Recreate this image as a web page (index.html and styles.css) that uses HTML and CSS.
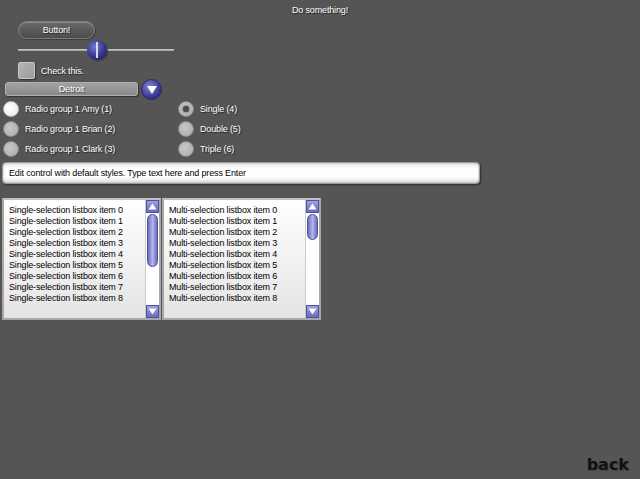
FILE: index.html
```html
<!DOCTYPE html>
<html lang="en">
<head>
<meta charset="UTF-8">
<title>GUI demo</title>
<link rel="stylesheet" href="styles.css">
</head>
<body>
<div class="screen">
  <div class="title">Do something!</div>

  <div class="button-row">
    <button class="pill">Button!</button>
  </div>

  <div class="slider">
    <div class="track"></div>
    <div class="thumb"></div>
  </div>

  <div class="check-row">
    <span class="checkbox"></span>
    <span class="label">Check this.</span>
  </div>

  <div class="combo">
    <div class="combo-field">Detroit</div>
    <div class="combo-btn">
      <svg width="12" height="10" viewBox="0 0 12 10"><polygon points="1,1 11,1 6,9" fill="#fff"/></svg>
    </div>
  </div>

  <div class="radios">
    <div class="radio-col">
      <div class="radio"><span class="dot on"></span><span class="label">Radio group 1 Amy (1)</span></div>
      <div class="radio"><span class="dot"></span><span class="label">Radio group 1 Brian (2)</span></div>
      <div class="radio"><span class="dot"></span><span class="label">Radio group 1 Clark (3)</span></div>
    </div>
    <div class="radio-col second">
      <div class="radio"><span class="dot picked"></span><span class="label">Single (4)</span></div>
      <div class="radio"><span class="dot"></span><span class="label">Double (5)</span></div>
      <div class="radio"><span class="dot"></span><span class="label">Triple (6)</span></div>
    </div>
  </div>

  <div class="edit">Edit control with default styles. Type text here and press Enter</div>

  <div class="lists">
    <div class="listbox">
      <ul class="items">
        <li>Single-selection listbox item 0</li>
        <li>Single-selection listbox item 1</li>
        <li>Single-selection listbox item 2</li>
        <li>Single-selection listbox item 3</li>
        <li>Single-selection listbox item 4</li>
        <li>Single-selection listbox item 5</li>
        <li>Single-selection listbox item 6</li>
        <li>Single-selection listbox item 7</li>
        <li>Single-selection listbox item 8</li>
      </ul>
      <div class="scrollbar">
        <div class="arrow"><svg width="9" height="7" viewBox="0 0 9 7"><polygon points="0.5,6.5 8.5,6.5 4.5,0.5" fill="#fff"/></svg></div>
        <div class="sb-track"><div class="sb-thumb long"></div></div>
        <div class="arrow"><svg width="9" height="7" viewBox="0 0 9 7"><polygon points="0.5,0.5 8.5,0.5 4.5,6.5" fill="#fff"/></svg></div>
      </div>
    </div>
    <div class="listbox">
      <ul class="items">
        <li>Multi-selection listbox item 0</li>
        <li>Multi-selection listbox item 1</li>
        <li>Multi-selection listbox item 2</li>
        <li>Multi-selection listbox item 3</li>
        <li>Multi-selection listbox item 4</li>
        <li>Multi-selection listbox item 5</li>
        <li>Multi-selection listbox item 6</li>
        <li>Multi-selection listbox item 7</li>
        <li>Multi-selection listbox item 8</li>
      </ul>
      <div class="scrollbar">
        <div class="arrow"><svg width="9" height="7" viewBox="0 0 9 7"><polygon points="0.5,6.5 8.5,6.5 4.5,0.5" fill="#fff"/></svg></div>
        <div class="sb-track"><div class="sb-thumb short"></div></div>
        <div class="arrow"><svg width="9" height="7" viewBox="0 0 9 7"><polygon points="0.5,0.5 8.5,0.5 4.5,6.5" fill="#fff"/></svg></div>
      </div>
    </div>
  </div>

  <div class="footer">
    <span class="back">back</span>
  </div>
</div>
</body>
</html>
```

FILE: styles.css
```css
html, body {
  margin: 0;
  padding: 0;
}
body {
  background-color: #555555;
  font-family: "Liberation Sans", Arial, sans-serif;
  font-size: 9px;
  letter-spacing: -0.15px;
  color: #fff;
}
.screen {
  width: 640px;
  height: 479px;
  display: flex;
  flex-direction: column;
  overflow: hidden;
}
.label {
  color: #fff;
  text-shadow: 1px 1px 1px #222;
}
.title {
  height: 20px;
  line-height: 20px;
  text-align: center;
  text-shadow: 1px 1px 1px #222;
}
.button-row {
  padding-left: 18px;
  height: 20px;
  margin-top: 1px;
}
.pill {
  width: 77px;
  height: 18px;
  padding: 0;
  border-radius: 9px;
  border: 1px solid #7c7c7c;
  background: linear-gradient(#6a6a6a, #4c4c4c);
  box-shadow: 1px 1px 1px #3a3a3a, inset 0 1px 0 #8a8a8a;
  color: #fff;
  font-family: inherit;
  font-size: 9px;
  letter-spacing: -0.15px;
  text-shadow: 1px 1px 1px #222;
}
.slider {
  position: relative;
  height: 20px;
  margin-left: 18px;
  width: 156px;
}
.track {
  position: absolute;
  left: 0;
  right: 0;
  top: 8px;
  height: 2px;
  background: linear-gradient(#d0d0d0, #9a9a9a);
}
.thumb {
  position: absolute;
  left: 69px;
  top: -1px;
  width: 20px;
  height: 20px;
  border-radius: 50%;
  background: radial-gradient(circle at 40% 35%, #7878c8, #34348e 55%, #1c1c58);
  box-shadow: 1px 1px 1px #333;
}
.thumb::after {
  content: "";
  position: absolute;
  left: 9px;
  top: 2px;
  width: 2px;
  height: 16px;
  background: #d8d8f0;
}
.check-row {
  display: flex;
  align-items: center;
  gap: 6px;
  padding-left: 18px;
  height: 19px;
}
.checkbox {
  width: 15px;
  height: 15px;
  border: 1px solid #c8c8c8;
  border-radius: 2px;
  background: linear-gradient(135deg, #b4b4b4, #9c9c9c);
  box-shadow: 1px 1px 1px #333;
}
.combo {
  display: flex;
  align-items: center;
  margin-left: 5px;
  height: 18px;
}
.combo-field {
  width: 131px;
  height: 12px;
  line-height: 12px;
  text-align: center;
  border: 1px solid #b0b0b0;
  border-radius: 3px;
  background: linear-gradient(#a2a2a2, #8a8a8a);
  box-shadow: 1px 1px 1px #333;
  text-shadow: 1px 1px 1px #444;
}
.combo-btn {
  width: 19px;
  height: 19px;
  margin-left: 3px;
  border-radius: 50%;
  border: 1px solid #2a2a6a;
  background: radial-gradient(circle at 40% 35%, #8686d0, #3a3a98 60%, #24246a);
  display: flex;
  align-items: center;
  justify-content: center;
}
.combo-btn svg {
  margin-top: 1px;
}
.radios {
  display: flex;
  margin-top: 1px;
}
.radio-col {
  width: 175px;
  padding-left: 3px;
}
.radio-col.second {
  padding-left: 0;
}
.radio {
  display: flex;
  align-items: center;
  gap: 6px;
  height: 20px;
}
.dot {
  width: 16px;
  height: 16px;
  border-radius: 50%;
  background: radial-gradient(circle at 40% 40%, #c8c8c8, #a8a8a8);
  border: 1px solid #8a8a8a;
  box-sizing: border-box;
  position: relative;
}
.dot.on {
  background: radial-gradient(circle at 40% 40%, #ffffff, #e6e6e6);
  border-color: #bbb;
}
.dot.picked::after {
  content: "";
  position: absolute;
  left: 4px;
  top: 4px;
  width: 6px;
  height: 6px;
  border-radius: 50%;
  background: #4a4a4a;
  box-shadow: 0 0 2px #333;
}
.edit {
  margin: 3px 0 0 2px;
  width: 470px;
  height: 20px;
  line-height: 20px;
  padding-left: 6px;
  color: #000;
  border-radius: 4px;
  border: 1px solid #9a9a9a;
  background: linear-gradient(#e8e8e8, #ffffff 30%, #ffffff 70%, #dedede);
  box-shadow: 1px 1px 2px #2e2e2e, inset 0 0 2px #888;
}
.lists {
  display: flex;
  gap: 1px;
  margin: 14px 0 0 2px;
}
.listbox {
  display: flex;
  width: 155px;
  height: 118px;
  border: 2px solid #a8a8a8;
  border-top-color: #c0c0c0;
  background: linear-gradient(#ffffff, #e4e4e4);
}
.items {
  flex: 1;
  list-style: none;
  margin: 0;
  padding: 5px 0 0 5px;
  color: #000;
}
.items li {
  height: 11px;
  line-height: 11px;
}
.scrollbar {
  width: 13px;
  display: flex;
  flex-direction: column;
  background: #fff;
  border-left: 1px solid #ccc;
}
.arrow {
  height: 13px;
  display: flex;
  align-items: center;
  justify-content: center;
  background: linear-gradient(#a0a0e0, #6a6ac0);
  border: 1px solid #5050a0;
  box-sizing: border-box;
}
.sb-track {
  flex: 1;
  padding: 1px 0;
}
.sb-thumb {
  margin: 0 1px;
  border-radius: 6px;
  border: 1px solid #4e4e9e;
  background: linear-gradient(90deg, #6c6cc0, #b4b4ea 50%, #6c6cc0);
}
.sb-thumb.long {
  height: 51px;
}
.sb-thumb.short {
  height: 24px;
}
.footer {
  margin-top: auto;
  display: flex;
  justify-content: flex-end;
  padding: 0 11px 5px 0;
}
.back {
  font-family: "DejaVu Sans", sans-serif;
  font-weight: bold;
  font-size: 16px;
  letter-spacing: 0;
  color: #111;
  text-shadow: 1px 1px 1px #444;
}
```
